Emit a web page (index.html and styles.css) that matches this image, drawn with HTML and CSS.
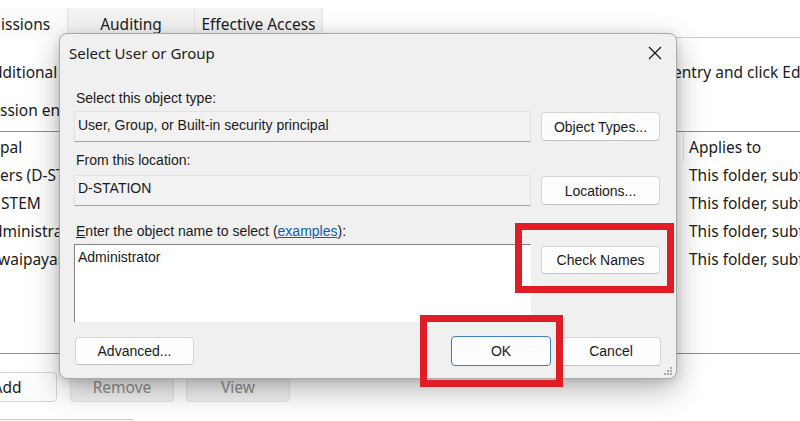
FILE: index.html
```html
<!DOCTYPE html>
<html>
<head>
<meta charset="utf-8">
<link rel="stylesheet" href="styles.css">
</head>
<body>
<div class="window">
  <div class="tabs">
    <div class="tab sel">issions</div>
    <div class="tab t2">Auditing</div>
    <div class="tab t3">Effective Access</div>
    <div class="tab-fill"></div>
  </div>
  <div class="panel">
    <div class="col-left">
      <div class="info">
        <div class="line cut7">dditional information, double-click a permission entry.</div>
        <div class="line second">ssion entries:</div>
      </div>
      <div class="list">
        <div class="hdr">pal</div>
        <div class="row">ers (D-STATION\Users)</div>
        <div class="row stem">STEM</div>
        <div class="row cut7">dministrators (D-STATION\Administrators)</div>
        <div class="row cut2">waipayan (D-STATION\Dwaipayan)</div>
      </div>
      <div class="actions">
        <div class="pbtn add">Add</div>
        <div class="pbtn dis">Remove</div>
        <div class="pbtn dis">View</div>
      </div>
      <div class="bottombox"></div>
    </div>
    <div class="col-mid"></div>
    <div class="col-right">
      <div class="info">
        <div class="line cut4">entry and click Edit (if available).</div>
      </div>
      <div class="list">
        <div class="hdr"><span class="hcell">Applies to</span></div>
        <div class="row">This folder, subfolders and files</div>
        <div class="row">This folder, subfolders and files</div>
        <div class="row">This folder, subfolders and files</div>
        <div class="row">This folder, subfolders and files</div>
      </div>
    </div>
  </div>

  <div class="dialog">
    <div class="titlebar">
      <span class="title">Select User or Group</span>
      <span class="close">
        <svg width="14" height="14" viewBox="0 0 14 14"><path d="M1 1 L13 13 M13 1 L1 13" stroke="#1c1c1c" stroke-width="1.3" fill="none"/></svg>
      </span>
    </div>
    <div class="dlg-body">
      <div class="label">Select this object type:</div>
      <div class="frow">
        <div class="field">User, Group, or Built-in security principal</div>
        <div class="btn">Object Types...</div>
      </div>
      <div class="label l2">From this location:</div>
      <div class="frow r2">
        <div class="field f2">D-STATION</div>
        <div class="btn">Locations...</div>
      </div>
      <div class="label l3"><span class="ul">E</span>nter the object name to select (<span class="link">examples</span>):</div>
      <div class="frow r3">
        <div class="textarea">Administrator</div>
        <div class="btn check">Check Names</div>
      </div>
      <div class="footer">
        <div class="btn adv">Advanced...</div>
        <div class="spacer"></div>
        <div class="btn ok">OK</div>
        <div class="btn cancel">Cancel</div>
      </div>
    </div>
    <div class="grip">
      <svg width="10" height="10" viewBox="0 0 10 10" fill="#a8a8a8">
        <rect x="7" y="1" width="2" height="2"/>
        <rect x="4" y="4" width="2" height="2"/><rect x="7" y="4" width="2" height="2"/>
        <rect x="1" y="7" width="2" height="2"/><rect x="4" y="7" width="2" height="2"/><rect x="7" y="7" width="2" height="2"/>
      </svg>
    </div>
  </div>

  <div class="mark mark-check"></div>
  <div class="mark mark-ok"></div>
</div>
</body>
</html>
```

FILE: styles.css
```css
html, body { margin: 0; padding: 0; }
body { background: #fff; }

.window {
  position: relative;
  width: 800px;
  height: 421px;
  overflow: hidden;
  background: #fff;
  font-family: "Noto Sans", "Open Sans", sans-serif;
  font-size: 15.5px;
  color: #1b1b1b;
  padding-top: 8px;
  box-sizing: border-box;
}

/* tabs */
.tabs { display: flex; height: 30px; }
.tab {
  box-sizing: border-box;
  height: 30px;
  padding-top: 2px;
  display: flex;
  align-items: center;
  justify-content: center;
  background: #f3f3f3;
  border-right: 1px solid #e2e2e2;
  white-space: nowrap;
  line-height: 20px;
}
.tab.sel { width: 68px; background: #fbfbfb; justify-content: flex-start; padding-left: 1px; }
.tab.t2 { width: 127px; }
.tab.t3 { width: 128px; border-right: 1px solid #e6e6e6; }
.tab-fill { flex: 1; border-bottom: 1px solid #cfcfcf; }

/* background panel */
.panel {
  display: grid;
  grid-template-columns: 59px 618px 123px;
}
.col-left, .col-right { white-space: nowrap; line-height: 20px; }
.col-right { overflow: hidden; }

.info { height: 93px; box-sizing: border-box; padding-top: 24px; }
.info .second { margin-top: 18px; }
.cut7 { text-indent: -7px; }
.cut4 { text-indent: -4px; }
.cut2 { text-indent: -2px; }

.list {
  box-sizing: border-box;
  height: 223px;
  border-top: 1px solid #8e8e8e;
  border-bottom: 1px solid #8e8e8e;
}
.list .hdr { height: 29px; display: flex; align-items: center; }
.list .row { height: 28px; display: flex; align-items: center; }
.list .row.stem { padding-left: 1px; }
.col-right .list .row { padding-left: 12px; }
.hcell {
  margin-left: 6px;
  padding-left: 5px;
  border-left: 1px solid #e4e4e4;
  height: 29px;
  display: flex;
  align-items: center;
}

.actions { display: flex; gap: 12px; margin-top: 18px; }
.pbtn {
  box-sizing: border-box;
  flex: none;
  width: 104px;
  height: 30px;
  display: flex;
  align-items: center;
  justify-content: center;
  border: 1px solid #d6d6d6;
  border-radius: 4px;
  background: #fdfdfd;
}
.pbtn.add { width: 100px; margin-left: -43px; margin-right: 1px; }
.pbtn.dis { background: #f2f2f2; color: #8d8d8d; border-color: #e4e4e4; }
.bottombox { width: 133px; height: 10px; margin-top: 17px; border-top: 1px solid #c8c8c8; }

/* dialog */
.dialog {
  position: absolute;
  left: 59px;
  top: 33px;
  width: 618px;
  height: 346px;
  box-sizing: border-box;
  background: #f0f0f0;
  border: 1px solid #a9a9a9;
  border-radius: 8px;
  box-shadow: 0 10px 30px rgba(0,0,0,0.30), 0 2px 8px rgba(0,0,0,0.12);
  z-index: 2;
  font-family: "Liberation Sans", Arial, sans-serif;
  font-size: 14px;
  color: #1a1a1a;
}
.titlebar {
  height: 38px;
  display: flex;
  align-items: center;
  justify-content: space-between;
  padding: 0 14px 0 9px;
}
.title { font-family: "Noto Sans", "Open Sans", sans-serif; font-size: 15px; color: #1b1b1b; line-height: 20px; margin-top: -1px; }
.close { display: flex; width: 14px; height: 14px; margin-top: -1px; }

.dlg-body { padding: 0 15px 0 14px; }
.label { line-height: 16px; padding-left: 2px; margin-top: 18px; white-space: nowrap; }
.label.l2 { margin-top: 10px; }
.label.l3 { margin-top: 17px; }
.ul { text-decoration: underline; }
.link { color: #0a62b8; text-decoration: underline; }

.frow {
  display: grid;
  grid-template-columns: 457px 119px;
  column-gap: 10px;
  align-items: center;
  margin-top: 5px;
}
.frow.r2 { margin-top: 7px; }
.frow.r3 { align-items: start; margin-top: 5px; }

.field {
  box-sizing: border-box;
  height: 31px;
  padding: 5px 3px 0;
  line-height: 16px;
  background: #f2f2f2;
  border: 1px solid #e2e2e2;
  border-bottom-color: #a3a3a3;
  white-space: nowrap;
}
.field.f2 { padding-top: 4px; }
.textarea {
  box-sizing: border-box;
  height: 78px;
  padding: 4px 3px 0;
  line-height: 16px;
  background: #fff;
  border-top: 1px solid #858585;
  border-left: 1px solid #858585;
}

.btn {
  box-sizing: border-box;
  height: 29px;
  display: flex;
  align-items: center;
  justify-content: center;
  background: #fdfdfd;
  border: 1px solid #d5d5d5;
  border-bottom-color: #c4c4c4;
  border-radius: 4px;
  white-space: nowrap;
}
.btn.check { margin-top: 2px; height: 28px; }

.footer { display: flex; align-items: center; margin-top: 14px; gap: 10px; }
.btn.adv { width: 119px; margin-left: 1px; height: 28px; }
.spacer { flex: 1; }
.btn.ok { width: 100px; height: 30px; border: 1px solid #3d7fc1; }
.btn.cancel { width: 100px; height: 29px; }

.grip { position: absolute; right: 3px; bottom: 2px; width: 10px; height: 10px; display: flex; }

/* annotation boxes */
.mark {
  position: absolute;
  box-sizing: border-box;
  border: 7px solid #e01c24;
  z-index: 3;
}
.mark-check { left: 515px; top: 223px; width: 159px; height: 70px; }
.mark-ok { left: 420px; top: 315px; width: 143px; height: 72px; }
```
